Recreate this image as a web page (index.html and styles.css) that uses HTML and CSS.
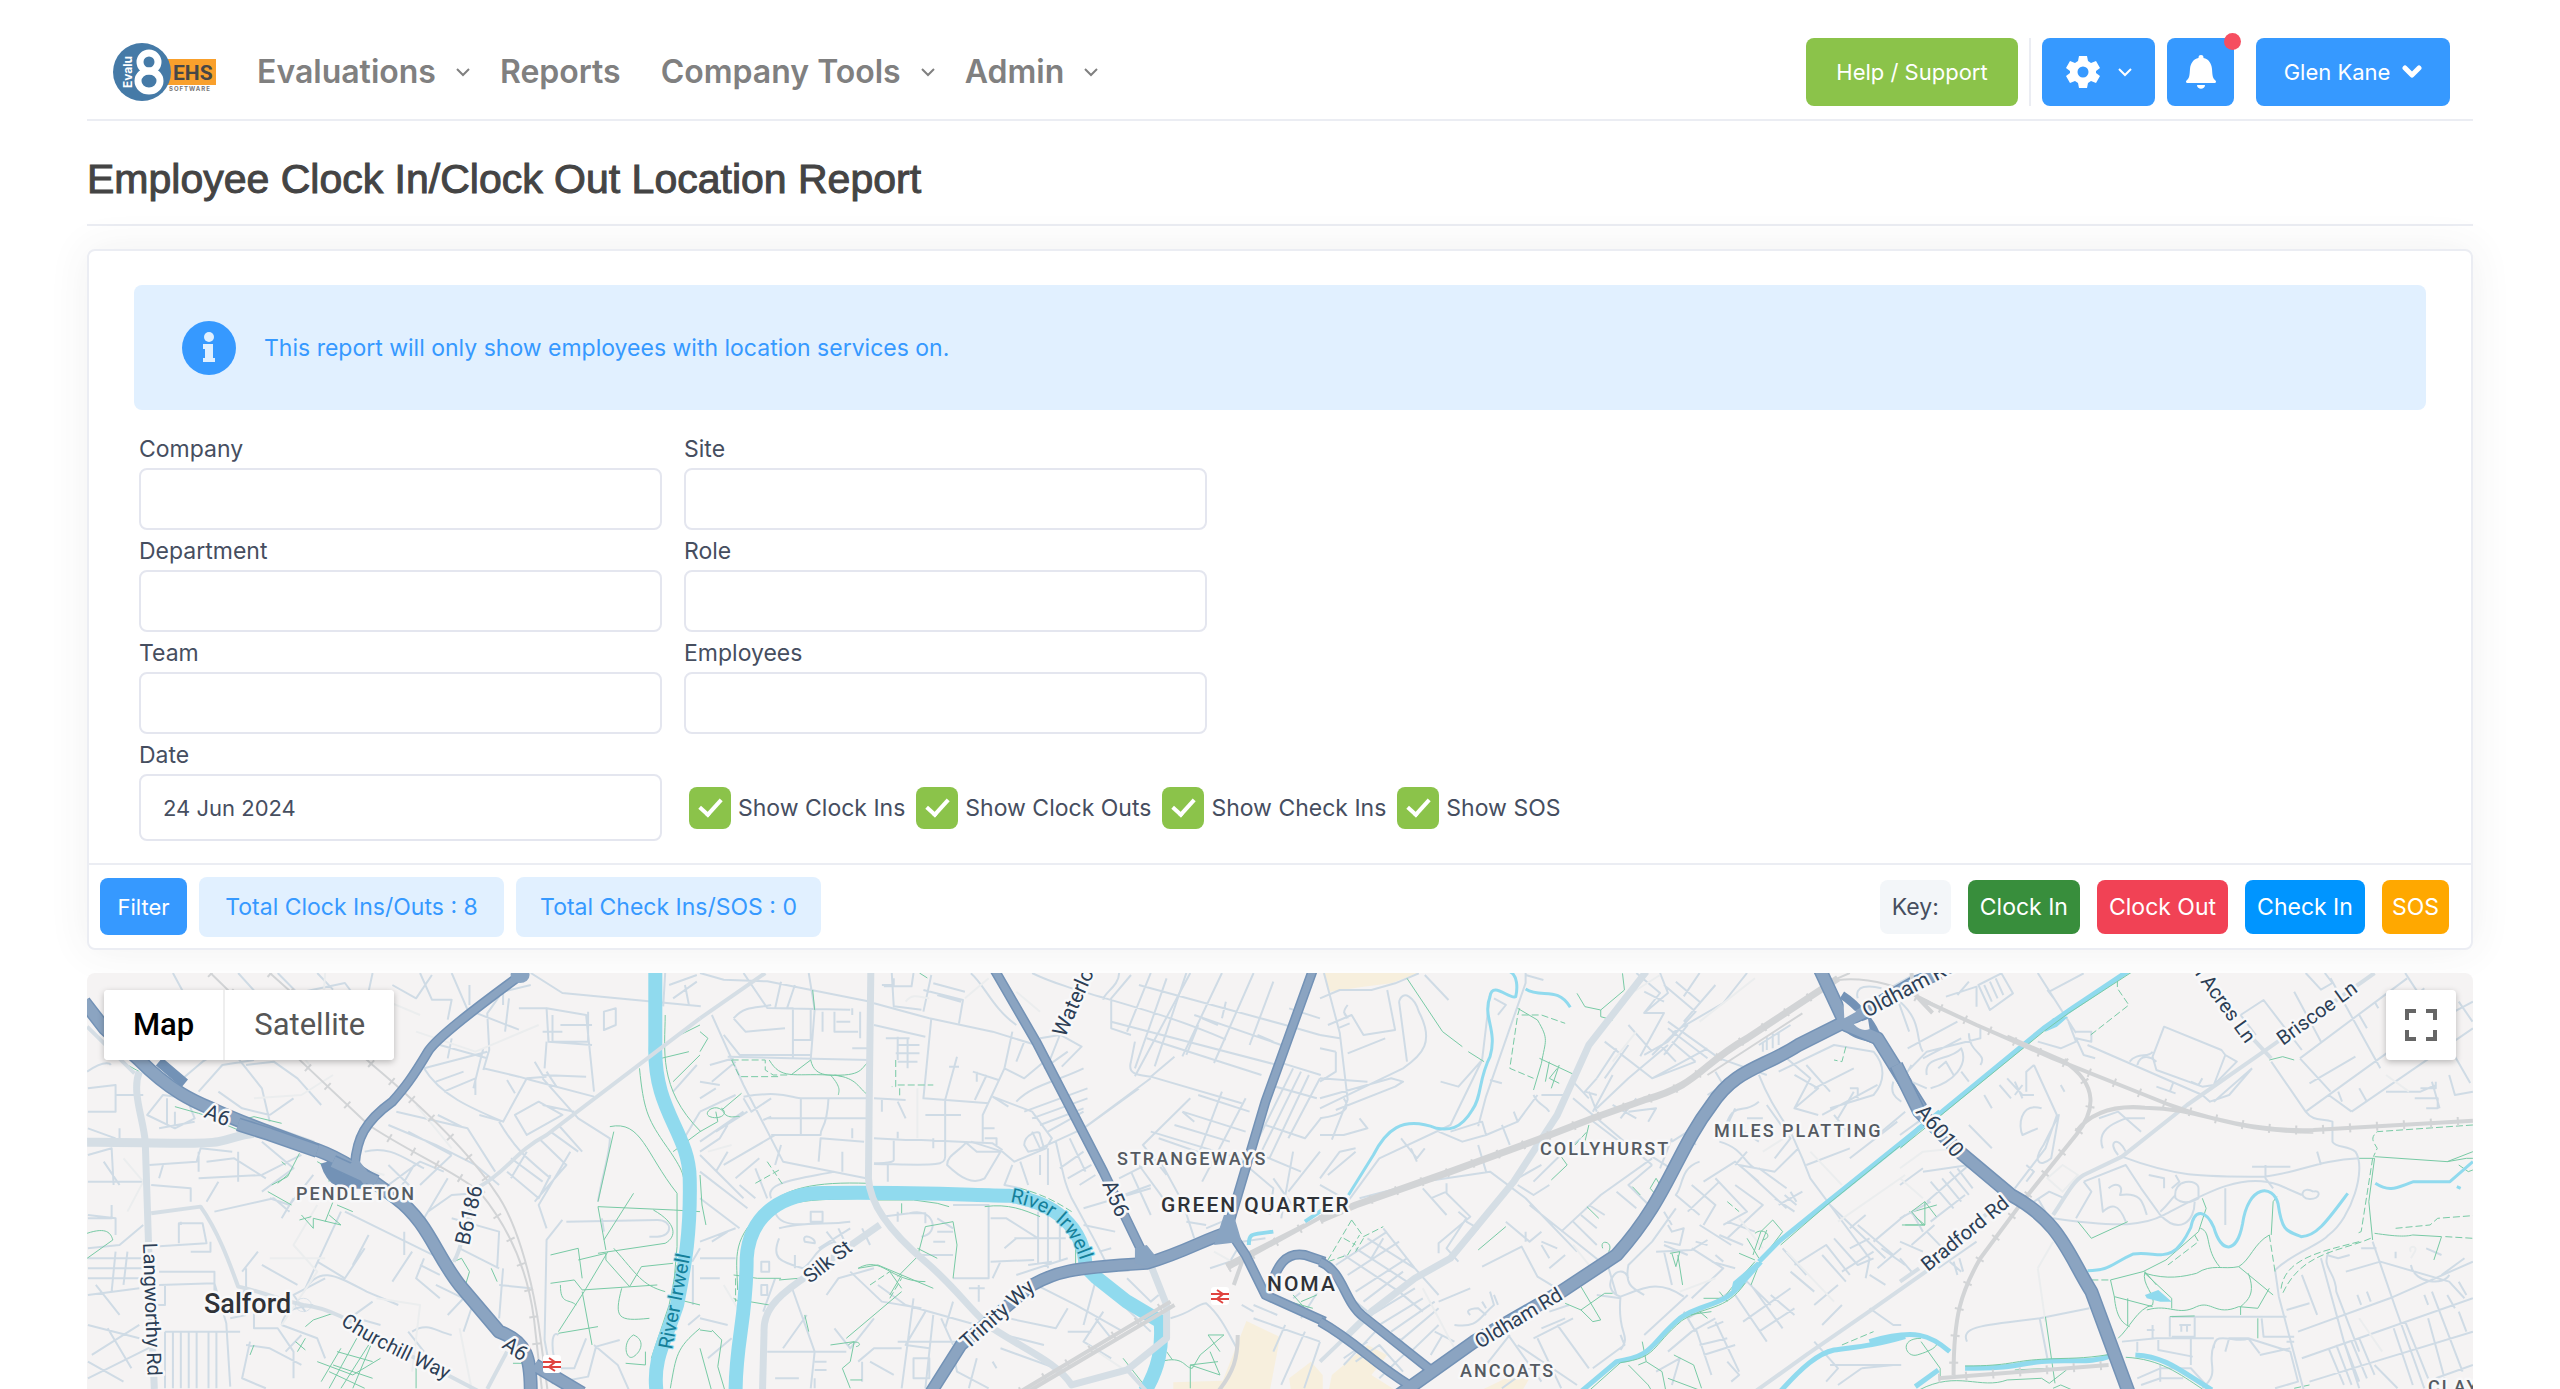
FILE: index.html
```html
<!DOCTYPE html>
<html lang="en">
<head>
<meta charset="utf-8">
<meta name="viewport" content="width=device-width, initial-scale=1">
<title>Employee Clock In/Clock Out Location Report</title>
<link rel="stylesheet" href="styles.css">
</head>
<body>
<div class="page">
  <header class="topbar">
    <a class="logo" href="#" aria-label="Evalu8 EHS Software">
      <svg width="104" height="60" viewBox="0 0 104 60">
        <rect x="54" y="17" width="49" height="26" fill="#f9a02c"/>
        <circle cx="29" cy="30" r="29" fill="#457aa7"/>
        <text class="logo-side" transform="translate(19 46) rotate(-90)">Evalu</text>
        <g fill="none" stroke="#fff" stroke-width="7"><ellipse cx="36" cy="20" rx="9" ry="9"/><ellipse cx="36" cy="39" rx="11" ry="10"/></g>
        <text class="logo-ehs" x="60" y="38">EHS</text>
        <text class="logo-soft" x="56" y="49">SOFTWARE</text>
      </svg>
    </a>
    <nav class="nav">
      <a class="nav-drop" href="#">Evaluations <svg class="chev" viewBox="0 0 14 10"><path d="M1 2l6 6 6-6"/></svg></a>
      <a class="nav-plain" href="#">Reports</a>
      <a class="nav-drop" href="#">Company Tools <svg class="chev" viewBox="0 0 14 10"><path d="M1 2l6 6 6-6"/></svg></a>
      <a class="nav-drop" href="#">Admin <svg class="chev" viewBox="0 0 14 10"><path d="M1 2l6 6 6-6"/></svg></a>
    </nav>
    <div class="tools">
      <button class="btn btn-green" type="button">Help / Support</button>
      <span class="sep"></span>
      <button class="btn btn-gear" type="button" aria-label="Settings">
        <svg width="34" height="34" viewBox="0 0 34 34"><path fill="#fff" fill-rule="evenodd" d="M13 1h8l1 5 3 2 5-2 4 7-4 3v2l4 3-4 7-5-2-3 2-1 5h-8l-1-5-3-2-5 2-4-7 4-3v-2l-4-3 4-7 5 2 3-2zM17 11.500a5.500 5.500 0 1 0 0 11a5.500 5.500 0 1 0 0-11z"/></svg>
        <svg class="chev chev-white" viewBox="0 0 14 10"><path d="M1 2l6 6 6-6"/></svg>
      </button>
      <button class="btn btn-bell" type="button" aria-label="Notifications">
        <svg width="30" height="34" viewBox="0 0 30 34"><path fill="#fff" d="M15 0c2 0 2.500 1 2.500 3 5 1 8 5 8.500 11 .4 6 .5 9 3 11 2 2 1 3-1 3H2c-2 0-3-1-1-3 2.500-2 2.600-5 3-11 .5-6 3.500-10 8.500-11 0-2 .5-3 2.500-3zM11 30h8c0 5-8 5-8 0z"/></svg>
        <span class="dot"></span>
      </button>
      <button class="btn btn-user" type="button">Glen Kane <svg width="20" height="14" viewBox="0 0 20 14"><path d="M3 3l7 7 7-7" fill="none" stroke="#fff" stroke-width="5" stroke-linecap="round" stroke-linejoin="round"/></svg></button>
    </div>
  </header>

  <h1 class="title">Employee Clock In/Clock Out Location Report</h1>

  <main class="content">
    <form class="card">
      <div class="card-body">
        <div class="alert">
          <svg width="54" height="54" viewBox="0 0 54 54"><circle cx="27" cy="27" r="27" fill="#3699ff"/><g fill="#e1f0ff"><circle cx="27" cy="16" r="5"/><path d="M21 23h10v14h2v4H21v-4h2v-9h-2z"/></g></svg>
          <span>This report will only show employees with location services on.</span>
        </div>
        <div class="fields">
          <div class="field"><label for="company">Company</label><input id="company" type="text"></div>
          <div class="field"><label for="site">Site</label><input id="site" type="text"></div>
          <div class="field"><label for="department">Department</label><input id="department" type="text"></div>
          <div class="field"><label for="role">Role</label><input id="role" type="text"></div>
          <div class="field"><label for="team">Team</label><input id="team" type="text"></div>
          <div class="field"><label for="employees">Employees</label><input id="employees" type="text"></div>
          <div class="field field-date"><label for="date">Date</label><input id="date" type="text" value="24 Jun 2024"></div>
          <div class="checks">
            <label class="check"><input type="checkbox" checked><span>Show Clock Ins</span></label>
            <label class="check"><input type="checkbox" checked><span>Show Clock Outs</span></label>
            <label class="check"><input type="checkbox" checked><span>Show Check Ins</span></label>
            <label class="check"><input type="checkbox" checked><span>Show SOS</span></label>
          </div>
        </div>
      </div>
      <div class="card-foot">
        <button class="filter" type="button">Filter</button>
        <span class="total">Total Clock Ins/Outs : 8</span>
        <span class="total">Total Check Ins/SOS : 0</span>
        <div class="keys">
          <span class="key key-label">Key:</span>
          <span class="key key-in">Clock In</span>
          <span class="key key-out">Clock Out</span>
          <span class="key key-check">Check In</span>
          <span class="key key-sos">SOS</span>
        </div>
      </div>
    </form>

    <section class="map" aria-label="Map">
      <svg class="map-art" viewBox="87 973 2386 416" preserveAspectRatio="xMinYMin slice">
        <!-- Salford and Pendleton -->
        <g transform="translate(80 965) scale(.3954 .3333)">
          <path class="st" d="M235 24L265 90M400 24L450 90 560 80 640 180 700 260M500 24l50 60 120-30 50 80 50-10M600 24l40 50M740 24l-20 110M860 24l30 80 50 0-10 60M790 60l60 40 40-70M940 24l40 110 130 60M985 60v60M1140 24l80 60 350 40M1140 60l-70 20v40M1060 95l-30 50 5 110-15 60M1085 100l-10 100M1110 130h70l5 100 110 10M1180 130l100 20 20 230M1195 150v80h90v-90M1215 180h80M1170 200h50M1180 230l-5 80M1325 140l30-10v50l-30 15zM870 310l160-50M910 240l120 40M940 220l-10 60M1020 310l90 25 30 10 160 50M1020 250l-25 120M1150 290l20 40 110 5M870 310c40 80 120 120 200 160l60-130 50-5M900 350l70-30M920 380l80-40v50M1080 345l20 40M1180 320l25 45M1060 470c40 80 60 100 130 170M1010 450l60 20M780 480l120 60 100 60 60 60M800 440l180 50 70 130M905 450l60 35M830 500l110 70M720 560c60-20 100 20 150 50M780 660l80-70 60 30M780 600l60 70M845 600l-40 80M880 740l60-50 60-5M930 640l-60 120M940 570l-80 90M1080 620l80 80 30-70M1090 580l80 70M1130 560l-40 80M1160 520l70 80-80 110M1100 450l60-40 60 40-90 60zM1250 440l-80-20M1190 500l70 60M1210 480l60 80M1240 560l-80 160 20 70M1310 710c10-80 30-140 30-190l-80-60-90-120"/>
          <path class="st" d="M20 370l70-10v80H20M90 390h70M170 450l40-60 60 10 20 60-50 30zM220 400v80M200 490l90-20M18 320c50-40 60-20 60-20M250 350l60-60 80-60M300 380l60-80 80-15M400 280l60 90 20 100M420 300l70-10 60 50 60 80M350 380l60 50 70 20M480 450l60-50M100 490v50M240 440v50M20 490l70 30M20 570l60-20 5 110M60 590l40 70M20 650h150M175 600l120-10 10-40 80 10M300 560v60M320 590l70-10 80 60M180 660l100 10 0 40M200 640l10-40M300 640l160-10 100-60M400 560v90M460 530l80 80-80 70M350 650l-30 60M340 740l150-40 40 40M480 700l50 20 60-90M510 760l30-60M20 750l70 10v50M80 720v40h-60M180 845l140-10-10-60h-60v60M255 780v-10M160 780l-60 60-80 10M330 830v30l-50 0M20 880l150 0M20 910h150M20 940h150M90 860l-10 120M120 860l-10 100M20 990l130-20M40 960l60 90M200 960l140-5 30 120 10 190M200 920h140v60M215 960v60H190M215 1100h190M215 1100v170M235 1100v170M255 1100v170M275 1100v170M295 1100v170M325 1100v170M345 1100v170M20 1080l130 40M30 1170l120-90M70 1090l60 120M20 1190l90 60M20 1240l170-100"/>
          <path class="st" d="M670 740l240 140M570 970l90-230M565 980c40-80 80-50 160 0l80 40M600 890l70 50 50-90M790 950l50-90M730 810l-40 90M820 800v70M860 900l50 30M870 880l-20 60 60 60M940 760l120 40-5 110M990 760l-30 90 100 60M1060 960l80 10M1070 910l-10 150M900 960l70 40-40 50M990 1030l-20 70M840 1100c40-30 60 0 100 10M830 1100l40 60M740 1010l-70 60M620 940l-80 50 30 50M700 1060l60 20M460 900l90 60M420 910v60c-20 30-10 50 20 60v60l60 0 40 70v80M510 1080l90 40 20 60M510 1080c10-60 50-50 80-60M430 1130l-20 110 60 30M380 1060l40-10M560 1200l-80-50-60-10M450 860l-40 60M520 1160l40-50M1230 770l230-5c40 0 40 50 0 50h-20M1220 765l-40 60-5 300 20 130 90-20 20-90 60-20M1210 1110c-20-20-20 60 0 100l40 0 30-90M1300 1140l60 60 30 80M1320 760l5 40M1480 24l-5 100M1500 100l60-50M1490 60l70-30M1530 60l10 60M1560 300l-60 80M1568 440l-40 80M1550 900v120M1568 850l-20 40M1568 1050l-30 30"/>
          <path class="st pale" d="M620 24l-10 180M850 200l150 60 160-80M700 160l60-60 100 50M520 200l60 100M440 400l120-10 80-60M110 580l50 70-40 90M600 720l-60 120 60 80-90 160M850 420l90 130M480 880l140 0M960 1090l30 180M750 1000l110 20-20 200M680 600l90 30"/>
          <path class="gr" d="M105 290l45 30M240 425l60 20 80 30 60-20 70 20M350 470l60 30 40 5M510 590l10 10M555 565l-30 70-40 25M475 680l60 40M640 710l-20 60M500 655l30-30M560 750l30 40 0-30 70 20-30-30M555 765l30-10M600 590l30 20 0 40M670 640l20-50M590 540l90 40M650 720l40 20M1340 485c80-20 90 80 170 200v160l-10 135M1310 725l190 10 68 5M1350 500l-40 210M1310 725l20 130M1400 685l-75 140M1450 735c60 40 60 80 30 100l-170 30M1190 870l70-20 10 90M1260 885l70-20 0 20 60 80 30-60 80-10M1335 860l-60 120-65 120M1190 955l60-10 20 30 190-15M1350 850c60 80 70 110 130 130M1215 960c0 60 20 40 40 60M1270 980l25 160M1210 1105l100-20M1370 970c-20 90-10 100 70 90M1400 1110c-30 20-20 80 0 65s30-50 0-65zM1380 1195l50 5 0-40M1415 310c10 120 20 150 60 220 60 100 50 100 55 150M1480 150c0 100-20 220 90 350M1500 560l68-60M1500 350l68-80M1470 280l70-20M1500 220l68-40"/>
          <path class="gr" d="M18 805c50-20 60 0 65 20l-65 55M945 890l20-10 20 40-10 40M1040 910l15 40M430 1170l10-30M570 1085l20-20 50-20M545 1130l25 25M570 1120l-20 40M600 1190l90 40 70-50M650 1160l90 30M660 1150l-50 100M700 1120l-70 150M730 1140l-70 130M640 1200l100 40M750 1100l-60 170M630 1220l90 50M850 1180v90M1095 1195l50 0M1500 1000l68 20M1568 1090c-60 60-60 80-75 180M1510 900l-20 120-45 160"/>
          <path class="rail" d="M330 24L560 290 730 480C830 560 950 620 1010 680 1080 780 1130 900 1148 1060L1168 1272M480 24L740 300C900 460 1000 590 1050 680 1100 760 1140 920 1160 1080L1182 1272"/>
          <path class="tie" d="M330 24L560 290 730 480C830 560 950 620 1010 680 1080 780 1130 900 1148 1060L1168 1272M480 24L740 300C900 460 1000 590 1050 680"/>
          <path class="riv" d="M1455 20V240C1450 440 1540 500 1542 640 1545 800 1530 900 1510 1020 1480 1130 1448 1180 1458 1280"/>
          <path class="art w4" d="M180 745L305 725C350 800 380 900 400 965 460 980 520 1010 565 1020 640 1030 700 1080 800 1150L1010 1280M945 890C970 850 985 700 1010 665 1080 620 1100 560 1180 510L1568 160M1080 1160L1030 1272M18 185l120 140"/>
          <path class="art w7" d="M150 320C130 380 160 460 165 530L175 900 188 1272"/>
          <path class="art w9" d="M18 532C130 530 300 542 350 530 390 520 400 510 440 505M470 490l120 50"/>
          <circle class="st" cx="565" cy="1020" r="20"/>
          <path class="hc w10" d="M1115 30C1000 130 900 220 880 260 840 340 820 370 790 410 720 470 700 520 695 600M200 290L265 355"/>
          <path class="hc w13" d="M10 110L62 190 150 285C230 380 290 410 330 430 420 480 520 520 600 555 680 590 740 650 800 700 880 770 900 870 960 960L1060 1100C1130 1130 1140 1180 1140 1280M1150 1200L1270 1285M625 590C640 650 660 652 720 650"/>
          <path class="hw w10" d="M1115 30C1000 130 900 220 880 260 840 340 820 370 790 410 720 470 700 520 695 600"/>
          <path class="hw w13" d="M10 110L62 190 150 285C230 380 290 410 330 430 420 480 520 520 600 555 680 590 740 650 800 700 880 770 900 870 960 960L1060 1100C1130 1130 1140 1180 1140 1280M1150 1200L1270 1285"/>
          <circle cx="1113" cy="30" r="24" fill="#89a4c2"/>
          <path class="hc w13" d="M400 478l80 30 120 50M640 590l110 60"/>
          <path class="hw w13" d="M400 478l80 30 120 50M640 590l110 60M690 590l40 60"/>
        </g>
        <!-- Strangeways and Green Quarter -->
        <g transform="translate(700 965) scale(.3954 .3333)">
          <path class="sand" d="M1382 1068l85 48-25 156h-245v-20l125-5zM1490 1240l55-50 30 40v50h-80z"/>
          <path class="st" d="M0 24l60 20 110 5 255 60M205 50l-15 80M240 60l-20 70M110 24l60 105 210 5M170 130h65v150M85 160c30-40 60-30 95-40M85 160l30 40 100-10M235 225h45v-90M275 24l15 110-10 150M310 140v60M340 140v60h60M405 140v80M385 150v-20M345 170h35M385 250h40M485 24l5 100 70 10M460 60h30v-20M540 24l-5 40h-70M585 30l-20 110M565 75l100 30-10 70M590 55l80 25M600 90l60 20M440 115l140 45 160 40 110 40M440 180l130 35M585 160l-20 240 165 15M470 220h60M500 240h55M495 265h60M500 290h50M525 220v90M500 215v70M650 275l-30 130v170c0 30-30 25-180 22M630 305l25 0M690 320l65 25M700 320v30M725 330l-30 75M800 180c-60-50-80-120-115-155M790 200l-20 110 50 30 50-50M770 310l-55 140 0 80M740 395l100 45 50 80-15 30-80 40-30-30-80-30M800 290l20-60M860 220l50-10-30 90M905 205l60 40-50 60M930 260l-60 50M800 410c40-50 100-60 170-100M820 440l160-70M840 460l140-60M860 480l110-50M880 500l90-60M740 395l40 30M900 530c20 100 20 120 40 170l60 130 30 70M935 520l40 100M910 610l60-50M930 640l60-40M960 660l40-30M860 550l110-60 170-150M970 490l140-120M1140 335l60-60M1240 24l-140 310"/>
          <path class="st" d="M840 24c100 60 300 100 490 200M1060 24c0 40-40 60-40 80M1090 30l-50 70v90l50 20M1140 24L1080 200M1180 40l-80 270M1230 24l-80 280M1320 24l-100 250M1400 24l-100 270M1450 50l-60 190M1110 60l370 120M1040 170l420 130M1090 290c-10 40 20 40 50 45l230 80M1100 230l-10 60M1130 220l290 110M1250 150l220 90M1270 160l40 20M1260 180l-30 90M1330 110l-10 50M1410 210l40 20M1480 180l88 30M1490 130l78 30M1460 290l110 40M1140 500l250 90M1240 400l-120 140 60 90M1220 440l160 60M1260 390l130 50M1200 480l140 50M1160 520l170 70M1220 440l30 30M1320 380l-60 190M1380 400l-110 250M1500 310l-100 240M1520 320l-100 240M1540 330l-100 250M1568 340l-80 180M1440 360l120 40M1430 480l100 40 40-60M1400 560l120 60M1390 610l60 60-10 80M1060 640l100-60 60 130 30 110M1090 620l50 130M1050 700l90-40M970 730l170-60M1110 600l80 130M1450 640l60 100M1500 560l-30 200M1568 560l-80 120"/>
          <path class="st" d="M30 150l80 210 100 230 210 50M60 210l40 60h180M70 275l160 5 200 5M85 280l-60 20M110 395c100-20 120 5 150 5h160M110 400l20 40 50-40M170 460h250M160 465l20-10M250 510h55c0-30 15 -10 20-110M255 400v110M300 590l5-70 110 10M180 510l70 0M205 540l-15 60M360 560v60M385 490v30M440 520l80 5h40l180 10 25 20M440 400l80 5M500 410l20 50M460 400v40M500 500v20M570 450h90M590 520v30M490 525v60c0 10-50 10-50 10M475 600v50M670 530l30 30h60l-40 80c-30 20-60 0-95-40 0-30 30-40 50-70M715 490h30M720 520h30v20M820 540c0-30 40-50 40-30l10 40-40 10zM790 600l-20 60 40 10M810 590l20 70M840 500l20 50M880 550v110M860 570v60M0 400l40-30M0 440l90-50M40 500l80-60M0 530l110-90M60 600l130-90M0 560l50-40 20-40M30 350l60-60M0 350l50 10M0 570l110 130M0 620l120 110M0 700l100 90M40 620l30-60M90 640l60-60M100 660l40 40M180 700c-20-50 80-60 160-80M170 700l-30-90M0 880h90M30 830l40-30M0 940h50M0 830l90-40M280 740h30v30h-30zM190 740c10 50 80 40 120 30M200 790c60-20 120-10 180-20M200 820c-20 60 0 70 60 90 30-20 20-50 80-80M265 830c-10-30 30-10 25 5zM240 870v40M300 850l80-60M320 800l40 60M350 790l20 50M410 790l20 50M155 890h20v30h-20zM155 960h15v30h-15z"/>
          <path class="st" d="M460 755l70-10h40v30M500 740v30M530 745c60-20 80 60 30 70M600 760l40 30M600 800l40 0M590 830h30M560 870l80 0M640 720h90v220h-90M735 760l40 0 80 60M735 890l110-5M795 820h130M855 740v160M880 750v160M910 780v110M800 820l-30 30M800 930l130-50M830 900l60-10M740 940l20-50M705 960v50M680 970h40M170 1160h200M190 940l-30 100M230 960l60 200-10 110M270 1050l-60 100M320 990l30-50 90-30M340 1090l40 60 60-90M380 920l80 90 100 20M450 960l70 60 180 60M540 1000l-30 270M570 1040l-50 100 60 10M590 1050l-20 220M610 1060l30 80M640 1010l-20 80M500 1130h160M540 1180l40 0v60l-40 0zM400 1190l40-40h70M410 1190v60M430 1190l60 40M290 1190h30M290 1215h30M290 1240v30M190 1240h60M640 1160l10 60 80 50M700 1180l-20 90M740 1190l10 20M760 1150l140 60M770 1110l100 30M780 1060l120 30 30-60M850 960l100 60 120 80M1000 950l-30 130M930 1100h60M1080 940l60 70 20-20M1060 1010l80 90M1020 1040l-50 90 70 50M1000 1060l40 60M1190 1060c60-20 60-40 90-45 40 40 60 100 80 140M1290 910l50-20M1340 890l30-60 60-10M1370 1020l30 20M1400 1020l60 30M1480 1080l-30 80M1530 1100l-60 160M1568 1130l-40 140M1400 1060l168 70M1500 1000l68-60M1520 1060l48-90M1280 790l60-30M1230 770l50 10M970 780l80 20M1010 860l30-10M0 1060l70 20M20 1180l60-60"/>
          <path class="st pale" d="M520 110c20-30 40-10 60-10M550 370v150M670 100l60-60M1300 860l60 40M800 80l60 60M20 560l60-20M980 1140l100 80M60 960l50 100"/>
          <path class="gr" d="M285 75l5 60M175 285c30 60 60 40 150 45s80-20 105-45M280 285c10 60 60 40 80 50M280 285l-50 45M330 330c30 40 20 50 20 60M340 330c60 10 60 40 85 60M105 385l-50 50c-20-20-50 10-30 20s50-5 30-25c10 40 40 20 45 25M0 500l45-30-5-30M0 200l20 20-20 40M555 24l20 15M0 630l5 90 10 60M425 655c-130-5-220 10-270 90-80 80-60 150-60 230M425 700c-160 5-220 0-270 80-50 100-30 150-30 230l50 10M440 705h100l60 10 30 10M510 715v30M640 770l-70 15-20 90-50 60M640 770l10 70-10 100M550 850l50 30M400 910c60-40 80 40 170 40M480 920l30 50M510 930l-30 60M400 910l50-10 60 30 80 40M200 945l50-5M85 930l60 10h60M85 1000l40 30M30 1095l25 30-10 80 20 80M0 1095l30 5M0 1150l30 130M265 1050l10 50M330 1140l60-10-10 60-20 20 20 60M370 1120l80-80 60-60M375 1140c20-20 40 0 20 5M380 1245h30M950 900v-60c-10-50-60-100-120-120M720 725c60-10 100 10 140 30M985 935l50 45M1180 1130l-15 60c60-20 60 20 80 20l20-40 60-60h-40l30 50M1180 1160l15 25M1240 1270v-70l70-10M1240 1200l75 30-25-70M1490 1010l60 20M1500 990l30 40M1520 1010l40-20M600 1230l50-90M1070 1180l60 90"/>
          <path class="gr dash" d="M80 285h85v30l20 15h40M80 285l20 50h100M495 285v80h-10M500 360h90M505 370v30M170 590l40 70M140 655l60-40M90 940v70M810 670c60 20 90 40 130 70M430 960l50-40M480 1000l30-60"/>
          <path class="riv" d="M90 1280C90 1130 118 1060 118 880 125 740 220 684 310 684 520 680 680 690 780 692 900 710 972 790 975 905L1000 935 1080 1010 1165 1070C1170 1150 1160 1210 1125 1280"/>
          <path class="riv w4" d="M1388 840c0-40 10-30 62-40M1530 770l50-40"/>
          <path class="art w7" d="M432 20L428 400 426 640C430 740 520 840 570 890 650 970 700 1060 740 1090 830 1160 900 1190 940 1260L1080 1215 1180 1120V1020L1140 900M455 780L250 950C190 1000 160 1040 162 1100L158 1280"/>
          <path class="art w4" d="M0 160L165 24M1080 1215L1130 1280"/>
          <path class="rail w4" d="M1335 910L1580 750M1330 900l200-120M1350 960l30-100M810 1280L1190 1010M830 1280L1200 1020M1310 1280c40-60 50-100 50-170"/>
          <path class="tie" d="M1335 910L1580 750M810 1280L1190 1010"/>
          <path class="hc w10" d="M745 15L850 230 1020 620 1130 890M1550 15L1430 410 1335 790 1380 870 1430 990 1580 1070M1440 975C1460 900 1480 860 1530 870L1580 890"/>
          <path class="hc w12" d="M580 1290L660 1140 840 960C900 920 930 910 1130 895 1230 860 1280 820 1340 800"/>
          <path class="hw w10" d="M745 15L850 230 1020 620 1130 890M1550 15L1430 410 1335 790 1380 870 1430 990 1580 1070M1440 975C1460 900 1480 860 1530 870L1580 890"/>
          <path class="hw w12" d="M580 1290L660 1140 840 960C900 920 930 910 1130 895 1230 860 1280 820 1340 800"/>
          <path fill="#89a4c2" d="M1325 750h25l20 80-70 10zM1100 850l30-10 30 45-30 20-30-10z"/>
        </g>
        <!-- Collyhurst, Miles Platting and Ancoats -->
        <g transform="translate(1320 965) scale(.3954 .3333)">
          <path class="sand" d="M5 20h255l-80 35-70 10-85 15zM30 1230l90-90 50 30-40 60 80 60H20zM400 1280l70-40 60 0-20 40z"/>
          <path class="st" d="M0 100l50-25 80 0 60-20 60-30M10 24l40 180 20 200-40 120M20 180l60-30 30 60 80-15-20-120M70 160l-10-20M45 190l30-15M70 265l95-45M0 340l120 10M70 120c-20 30 0 30 0 40M200 110c10-40 40-10 50 30 40 90 10 130-40 170L0 430M200 110l20 180M265 30l60 75M0 460c60-10 80-30 60-60M40 435l150-70 20-15-30-10-180 60M40 260v60L0 350M100 460l20 30-60 20H0M0 210l50 10M0 250l40 10M430 85l-20 200-60 80-45-15M430 345l30 10M410 285L330 480l-180 100-80 130M520 24v30l-100 340-20 90M520 30l45 15M440 100l30 20-20 30M330 500l80-30 10 40-60 20M300 500l60 30 60-20 80-40 50-80M490 440l10 30M460 480l20 60M400 540l20 80M205 520l40 60 20-30M230 550l15 40M0 640l50-80 40-10M20 630l40-40 30-30M0 660l60 40M100 700l160-50 170-30 90 80 130 160M260 670l60 80M320 655v30l60 70-80 80 0 30M320 680l-40 20M350 740l20 20-50 90 30 40M370 770l30 20-50 70M470 770l60 60 30-30M520 830v-30M560 840l20 40M500 660l40 30 40-30M500 640l60-40M530 720l200 190 20 80M540 650l60-70 60-60M410 905l100-60 40 90 70 50M580 910l40-40M600 850l-40-20M610 800l100-110 130-110M640 770l60 70M660 750l40 40M680 720l40 30M750 680l50 50M840 600l-60 60 60 70M780 800l60-60M820 560l80 60M640 400l60 60 140 140M680 460l100 90M700 430l80-90 100-100M680 380l20 60M700 340l-30 40 30 10M740 330l-50 110M740 420l60 40M760 460l40-60M780 440l70-10-20 40M640 350l40 50M560 390l70 0M540 390c10 30 30 30 40 50"/>
          <path class="st" d="M720 230l120 110 110-50M800 24l60 60-40 60 50 0-60 130M860 24l20 60-60 60M870 60l80 80-70 90-60 40M900 50l60 60M960 24l-40 70M1000 60l-80 110M1080 24l-60 90-130 90M880 190l100 90M900 200l-60 70M860 240l40 50M890 230l60 60M930 180l-60 90M980 250l-140 90M880 170l130 110 120 50M1000 320l20 40-40 30M820 80l50 30M780 180l60 80M750 250l-50 90M780 240l-60 100M1110 240l80-60M1120 230v30M1130 215v40M1145 205v45M1160 200v40M1180 280l60 60-40 90 60 20M1110 330c20 60 40 100 80 170l30 80 20 60 50 80 140 160M1110 410c-40 40-60 0-80 60l80 60M1130 420l60 100-40 60M1050 430l-20 50M1080 460l40 0M1160 320l140-80 100 20c30 40 30 90 0 130l-110 40M1200 330l60 40-60 60M1250 370l100-60M1230 300l60 80M1340 370l20 0 0 30M1270 450l140-90M1250 490l60-20 50 20M1300 450l40 60M1350 380l-40 80M1340 580l120-110M1230 600l110-50M1060 600l90 20 60-70M1080 560l-30 40M970 650l80-60 60 60M960 590c-50 20-40 70-60 100l60 60M890 530l40-30 20 40M890 520l-30 90M1010 530c60 20 60 60 90 80M940 660l60 60-30 60M930 740l80-90M1000 640l80 100-60 40M1050 660l70 60-90 100M960 780l80 60M1080 620l100 110M1110 610l70 60M1150 700l50 40M1160 720l60-40M1175 690l30 30M1190 680l15 30M1100 800l-70-30M1010 810l60 30M900 730l-60 100-60 70c-10 60 10 70 40 90M870 740l20 40M880 780l10 20 30-10-10 50-40-10M850 860l90-5 40-30M930 870l-60-30M980 840l-30-10M1000 870l20 20M870 860l20 100M940 850l80 60-80 90M990 890l60 20M780 940c-20-60-80 30-20 55 60-30 100-50 160 0M760 995c-10 120 30 110 0 160M700 990l60 10M820 1110l110-120M760 1110l10 30-80 70M640 1060l-100 60M600 1080l80 130M550 1120l60 150M500 1140l150 120M470 1100l90 150M580 1040l50-20M560 1090l60-30M420 1200l60-90M460 1270l70-60"/>
          <path class="st" d="M60 870l140 110 60 60M90 850l130 100M120 820l120 90M160 790l80 120 60 80M40 900l130-100M70 930l130-100M90 980l130-100M110 1010l100-90M130 1050l110-80M150 1080l110-80M180 1100l110-90M120 1040l-30-30M200 1130l100-100M230 1160l70-80M340 1080c60 10 60-20 100-60l-10-40M380 1050c-20-20 20-20 20-20l20 20M410 1010l10 20M440 990l10 30M300 1010l80-40M130 880l30-60M60 1180l60-50M90 1190l60-50 60 80M60 1200l80-100M150 1240l70-80M200 1120l30 40M290 1100l50 30M280 1170l30-60M850 1220l60-40-20 80M880 1160l60-60 60-40M950 1090l40 140M1000 1070l60 150M980 1090l40-20M960 1140l70-20M970 1170l80-30M1030 1190l30 40-20 20M920 1040l30 60M930 1060l150-110 60 70M1050 990l80 140M1090 960l80 130M1070 1070l120-100M1110 1100l90-70M1140 990l60 60M1170 850l60 80M1200 900l80-60 60 90M1190 920l60 60M1270 870l60 80M1290 720l100 160-10 60M1320 920l80-60M1300 820l60 80 40-20M1340 850l50-30M1360 780l90 90M1400 830l80-80M1420 850l60 50M1340 790l40-40M1410 910l60-60M1390 930l40 30M1250 1020l60-60M1270 1080l50-60M1390 1030l60 50 20 0M1250 1130l60 80-30 40M1290 1200h180M1370 1210l80-10M1310 1260l60-50M1420 500l60-60M1450 350c-10 40 10 50 20 60M1460 100l30 100M1360 100c-10-40 30-40 60-30M1440 70l60-40"/>
          <path class="st pale" d="M860 30l-80 60M1100 40l-140 130M800 200l-60 90M1060 760l60 90M1240 560l80 100M1310 770l170-140M640 840l60 90M1200 500l-80 60M1180 860l120 150M1000 940l-90 40M260 970l80 180"/>
          <path class="gr" d="M220 40l90 160 50 45M375 260l40 30M500 130l50 35c30 60 20 60 10 130l-20 80M555 280l90 50M580 290l-10 60M605 300l-20 70M580 340l25 15M600 310l-20 30M650 85l20 40 40 10 60-60-5-50M710 135v20l30 10M680 480l-10 50M610 575l15 25-40 45M675 725l30 35M790 665l20 25M850 640l-15 30 15 20 10-30zM715 850c-10-30 30-20 15 10M400 855l70-70M660 965l50 100-20 5-30-35M620 1015l40 20 60-50h20M885 865l25-5-10 45-10-40M905 870l12 90M1080 820l30 60M1115 800l30-35 25 35-70 110M1115 800l-20 70M1130 795l-20 60M1100 805c20-20 50 10 20 20M1060 865l40 20M1100 890l-60 80-20 30-50 0M1010 980l20 30M1110 900l-20 60M930 1050l60-10M960 1040l20 20M815 1130l10 60-20 10M825 1190l40 30 10 60M780 1200l50 60 10 20M895 1170l50 30 20 70M880 1240l90 40M1490 740l40 40-50 0M1500 740l60-20"/>
          <path class="gr dash" d="M505 130l-5 20-20 160 60 30M510 150h50l60 25M80 765l-60 120M80 765l30 50 50-30M110 820l-20 40M60 820l30 20M20 890l50-20 30-60M1030 710l30 30M1330 245l-10 45-20-5M1320 1140l80-40M645 540l30-40"/>
          <path class="riv w3" d="M480 20c20 10 20 50 15 75-15 10-60-50-65 0-20 60 20 100 0 180-30 70-20 120-45 160-30 60-60 60-90 55-90-40-130 10-160 80L72 690M520 72c40 30 80-10 113 55"/>
          <path class="riv w5" d="M1568 440L1280 715 1160 830 1110 890M1070 950c-50 80-100 60-160 110-80 80-60 110-160 130l-90 90M1160 1285c60-80 100-120 140-130 60-10 90-10 180-40"/>
          <path fill="#90daee" d="M1045 950l60-60 15 5-60 80-20 0z"/>
          <path class="gr" d="M1568 446L1280 722 1165 840M1075 955c-50 85-100 65-160 112-80 80-60 110-155 126l-85 90"/>
          <path class="art w7" d="M825 20L680 240 600 450 490 650 330 880 240 940 130 1040 70 1110"/>
          <path class="art w4" d="M70 1110L0 1190M1568 890L1400 1030 1230 1170 1100 1280"/>
          <path class="rail w7" d="M0 765L90 720 330 620 560 520 690 460 820 405C960 360 960 300 1080 220L1310 40"/>
          <path class="rail" d="M980 330L1220 145M1310 45C1380 35 1480 60 1568 130M1290 50L1340 24"/>
          <path class="tie" d="M0 765L90 720 330 620 560 520 690 460 820 405C960 360 960 300 1080 220L1310 40"/>
          <path class="hc w10" d="M0 890C60 920 60 1010 110 1055L280 1215M0 1070C90 1130 130 1190 225 1260"/>
          <path class="hc w13" d="M200 1290L390 1130 610 980 750 870C880 700 900 560 990 420 1050 310 1120 310 1210 240L1370 145 1500 55 1568 24M1265 15L1330 180 1410 220 1520 430"/>
          <path class="hc w8" d="M1320 90C1360 120 1400 180 1410 220M1370 145L1410 220M1330 180C1350 220 1390 210 1410 230"/>
          <path class="hw w10" d="M0 890C60 920 60 1010 110 1055L280 1215M0 1070C90 1130 130 1190 225 1260"/>
          <path class="hw w13" d="M200 1290L390 1130 610 980 750 870C880 700 900 560 990 420 1050 310 1120 310 1210 240L1370 145 1500 55 1568 24M1265 15L1330 180 1410 220 1520 430"/>
          <path fill="#f5f3f3" d="M1324 112l32 28-30 20zM1350 178l36-16 4 30q-20 10-40-14z"/>
        </g>
        <!-- Bradford and Clayton -->
        <g transform="translate(1900 965) scale(.3827 .3333)">
          <path class="st" d="M205 60l30 75 60-50-30-60zM220 60l20 50M235 50l20 50M250 40l20 50M360 24l100 180M390 80l90-55M385 75l20 30M120 95l80-30 0 60M150 90l30-40M0 110c60 60 40 120 60 150M20 250l130-80M60 280l100-60M10 330l60-70 140-40 0-30M180 205c0 60 50 60 30 95M70 330c-10-60 60-40 90-80 20 50-20 100-80 120M100 310l20-20 20 40M160 320l20 30M30 300l-20 40 60 30M220 390l20 40M260 360l30 40M300 350l20 50M280 340l40 50 30 0M300 390l20-30M440 170l20 60-40 20-60-20M350 300l-20 20 0 60M350 300l60 150-30 100-80 120M370 430c-60-20-60 60-50 80l40-20M420 360l10 20M375 540l40-90-20 130c-30 30-50 10-20-40zM330 600l20 20-20 30M460 200h40v30l-40-10 20 50 30 10M600 290c20-30 50-10 60-30M620 300c10-40 40-20 50-10M490 240l300 150 20 20 50-20 60-80M690 185l150 70 10 15-30 90-30 5-120-50-10-40zM850 270l30 20-60 70M670 365l50 20M715 350l-10 30M790 340l-10 20-20-10M920 310l-60 60-40 40M520 460l50-20 60 60M530 550c-20-60 40-80 60-90h50M570 570c-30-40 0-60 20-10M890 150l60-45 100 150M890 150l40 60M1060 24l40 50 30-20-20-30M1030 80l70 150M1125 40l130 270M1045 280l280-240M1070 355l120-80M1060 440l290-240 147-90M1320 24l40 70 130 260M1180 440l317-250M1120 390l60 50M1145 380l10 30M1200 370l20 40M1045 280l80 100M1200 150l20 40M1280 200l30 20M1240 110l10 20M1370 70l-20 20M1460 110l36 60M1435 330l15 60 47-10M1345 400h60v30h-30M1360 370h40v-20M1390 350l20 80M1270 380l90 0 40-20M970 290l90 150c20 30 40 20 70 30v60c10 20 40 10 60 30 30 50-10 200-70 250-20 30-90 50-140 105l10 80 60 260 40 160M580 575c140 60 200 60 370 60 90-10 140-50 250-55M920 605h100M955 600v40l20 30M1090 560l10 40M400 760c180 30 240 20 290-10 100-60 200-130 300-90l60 30M1080 680c-30-20-40 20-10 22s30-30 10-22M850 670v110M480 650l110-50 40 70 50 80M480 650l20 30-40 80M520 640l10 100c20-20 40-30 60 30M545 670c20-20 40-10 30 20 60-10 60 30 70 60M650 630l40 10v30M720 630l10 20-20 20M720 700c-10-60 60-60 60-30v30c-30 20-50 10-60 0zM770 710c0 60-40 100-90 40M680 740c20-20 30-40 40-50"/>
          <path class="st" d="M180 480l60 70M0 510l60-50M0 660l60-50M60 620l120-20-110 110M80 650l60 80M110 640l50 70M130 620l50 70M150 610l40 60M0 760l80-50M30 740l30 60M70 800l50 60M30 840l60-60M0 830l60 30M100 910l100-80M130 890l30 30M140 890l10 40M155 880l10 40M0 880l30 40M170 690l-90 80M350 710l40-30 40 20M360 700l20 40M175 1130c-20-50 60-50 190-70l130-30M365 1060l20 120M580 1130l90-10h150M620 1130v30M675 1125l0 30 90 20M760 1120v80M820 1150c0-60 60-10 90-30M820 1140c-20 60 20 80-30 130M850 1160l10-40h50l30 45M910 1120l110 40 20 90-60 20M940 1170l80-20M705 1055v60M770 1055v60h-60M710 1055h300M730 1080h30M735 1080v20M750 1080v20M945 1060l5 55h80M660 1080v40M645 1095h20M620 1240l60-30h80l40 50M630 1260l50-20h60M680 1200v50M1010 1130h20M1235 830l60 200 75 240M1010 1035l60-20M1050 930l40 120M1040 1100l240-100 217-110M1050 1180l447-180M1070 1250l170-60 257-90M1100 880l60 250 40 140M1120 860c-20 50 20 60 20 120l60 180M1165 920l90-30 180 60 40 50M1115 870l30 10 30-10M1205 850h40M1335 900c10 60 90 60 100 30M1375 850l40 20M1415 930l60-50M1295 860v20M1380 1060l50 210M1410 1040l60 180M1320 1070l60 170M1290 1090l50 170M1120 1150l40 110M1140 1140l40 120M1160 1130l40 120M1180 1130l40 110M1200 1120l40 110M1220 980l10 30M1195 990l10 30M1370 990l10 30M1390 980l20 60M1430 990l20 40M1460 950l20 40M1460 1040l20 60M1240 1200l60 70M1400 1240l97-40"/>
          <path class="st pale" d="M385 640l40-40 40 30-40 50zM0 610l60-50 90-10M360 910l20 160M360 910l40-80M1270 330l60 50M0 640l60 60M1335 860c-10-20 20-20 10 0l-10 20M1200 1060l60 100"/>
          <path class="gr" d="M30 740l35-30 30 45M65 710l0 70-60 0M30 740l30 40M965 285l35-10 30 10M465 770l35 50 95-50M790 700l10 30-20 70-85 85-60 35M785 790c30 10 10 60 50 115M635 920l-85 25 10 50c5 60 20 80 40 90M640 920c-10 40 30 70 20 100-40 10-60 70-90 100M640 925l70 75v30M640 925c60 20 100 10 135 0 40-30 70-10 110-20l90 85M560 995l100 30M595 1000v80M645 1035c60-20 80 20 130-10 40-20 50 30 110 0l50 5 30-60M910 925c20 60 0 80-20 100v25M885 905c30-20 40-70 80-95M985 695l-10 15-5 100M640 920l30 40M380 1055l25 200M935 1060v60M1200 580l40 0-15 130 10 115M1240 575l190 15 67-30M1430 590l50-10 17 0M1460 600l25 20 12-5M1240 805c60 10 80 10 100 5l75 5M1415 815l-20 70M705 1055l65-2M55 1120c-60 0-40 60-10 50s70-30 40-45M55 1130l50 80v30M50 1275c100-60 160 0 230-30l90-5M370 1240l20 15 45-40M400 1270l20-10 30 15M550 1150v30M300 1215l90-5"/>
          <path class="gr dash" d="M568 45v25l30 50-100 90M500 945h50M770 810l10 20-80 70M1497 480l-250 20c-20 20-10 30 0 50l-10 25M1235 580l-30 220-10 5M965 810l15 110M1230 820c-80 40-180 40-230 165M1200 830c-100 30-200 50-205 150M1295 790l90-10 20-20 92-8M1425 815l72 5M1030 1270l40-10"/>
          <path class="riv w5" d="M0 543L50 490 110 440 375 190 450 130 600 15M-80 1130C40 1090 80 1110 130 1160M170 1210c120 0 120-10 200-20s120 10 190-20M615 1170c80 5 120 50 200 105M40 1265L100 1215"/>
          <path class="riv w3" d="M490 917c60 0 60-20 120-50 70-10 100 40 150-80 10-60 40-50 60 0 20 80 60 80 75-10 15-120 80-120 93-60 10 80 20 80 60 98 40 0 70-50 122-130M1242 655c40 30 60 10 100-5h95l60-60M1455 665l10 5"/>
          <path fill="#90daee" d="M640 990l35-15 35 35-30 0-35-10zM375 190l25-30 40-5-30 30-30 15z"/>
          <path class="gr" d="M0 550L110 448 375 200 440 145 610 18M170 1203c120 0 120-15 200-20s100 0 180-15M590 1177c90 5 140 50 200 95"/>
          <path class="art w4" d="M0 950L50 910M400 750C430 700 450 650 480 630L580 575 750 420 950 260 1240 24M970 280L925 225M60 900L300 680"/>
          <path class="rail w4" d="M40 95L200 180 400 280 640 390C800 470 960 500 1080 495L1497 467M280 215L430 290C520 360 510 440 460 510L320 710 210 880C160 980 140 1050 140 1230M460 500C500 440 560 420 640 428 800 430 850 500 1080 500M100 1240L545 1200M30 24l5 60 50 60"/>
          <path class="tie" d="M40 95L200 180 400 280 640 390C800 470 960 500 1080 495L1497 467M430 290C520 360 510 440 460 510L320 710 210 880C160 980 140 1050 140 1230M100 1240L545 1200"/>
          <path class="hc w13" d="M-10 300L50 440 155 560 290 690C420 770 440 870 500 980L600 1290"/>
          <path class="hw w13" d="M-10 300L50 440 155 560 290 690C420 770 440 870 500 980L600 1290"/>
        </g>
        <!-- Street and river names -->
        <defs>
          <path id="irwell-n" d="M1010 1202C1045 1208 1086 1225 1087 1310"/>
          <path id="churchill" d="M340 1324C370 1345 400 1358 470 1391"/>
        </defs>
        <g class="road">
          <text transform="translate(203 1117) rotate(22)">A6</text>
          <text transform="translate(501 1347) rotate(36)">A6</text>
          <text transform="translate(469 1246) rotate(-77)">B6186</text>
          <text class="tight" transform="translate(143 1243) rotate(88)">Langworthy Rd</text>
          <text class="tight"><textPath href="#churchill">Churchill Way</textPath></text>
          <text transform="translate(1065 1038) rotate(-66)">Waterloo Rd</text>
          <text transform="translate(1102 1184) rotate(67)">A56</text>
          <text class="tight" transform="translate(810 1284) rotate(-38)">Silk St</text>
          <text transform="translate(968 1350) rotate(-42)">Trinity Wy</text>
          <text class="tight" transform="translate(1480 1349) rotate(-31)">Oldham Rd</text>
          <text transform="translate(1867 1018) rotate(-28)">Oldham Rd</text>
          <text transform="translate(1915 1112) rotate(50)">A6010</text>
          <text class="tight" transform="translate(1928 1272) rotate(-39)">Bradford Rd</text>
          <text class="tight" transform="translate(2178 951) rotate(54)">Ten Acres Ln</text>
          <text class="tight" transform="translate(2283 1046) rotate(-36)">Briscoe Ln</text>
        </g>
        <g class="water">
          <text transform="translate(672 1350) rotate(-79)">River Irwell</text>
          <text><textPath href="#irwell-n">River Irwell</textPath></text>
        </g>
        <g class="area">
          <text x="296" y="1200">PENDLETON</text>
          <text x="1117" y="1165">STRANGEWAYS</text>
          <text x="1540" y="1155">COLLYHURST</text>
          <text x="1714" y="1137">MILES PLATTING</text>
          <text x="1460" y="1377">ANCOATS</text>
          <text x="2428" y="1393">CLAYTON</text>
        </g>
        <g class="district">
          <text x="1161" y="1212">GREEN QUARTER</text>
          <text x="1267" y="1291">NOMA</text>
        </g>
        <text class="town" x="204" y="1313">Salford</text>
        <g id="stations" fill="none" stroke="#e0433f" stroke-width="2">
          <g transform="translate(552 1364)"><rect x="-9" y="-9" width="18" height="18" rx="3" fill="#fff" stroke="none"/><path d="M-9-2H9M-9 3H9M-3-6L3-2-3 3 3 7"/></g>
          <g transform="translate(1220 1296)"><rect x="-9" y="-9" width="18" height="18" rx="3" fill="#fff" stroke="none"/><path d="M-9-2H9M-9 3H9M-3-6L3-2-3 3 3 7"/></g>
        </g>
      </svg>
      <div class="map-ui">
        <div class="map-type">
          <button class="map-on" type="button">Map</button>
          <button type="button">Satellite</button>
        </div>
        <button class="full" type="button" aria-label="Toggle fullscreen view">
          <svg width="32" height="32" viewBox="0 0 32 32"><path d="M2 11V2h9M21 2h9v9M30 21v9h-9M11 30H2v-9" fill="none" stroke="#666" stroke-width="4"/></svg>
        </button>
      </div>
    </section>
  </main>
</div>
</body>
</html>
```
FILE: styles.css
```css
* { box-sizing: border-box; }
body { margin: 0; background: #fff; color: #464e5f; font: 23px/32px Inter, sans-serif; }
button, input { font: inherit; color: inherit; margin: 0; }
a { color: inherit; text-decoration: none; }
.page { display: flex; flex-direction: column; height: 100vh; min-height: 1100px; padding: 0 87px; overflow: hidden; }

.topbar { display: flex; align-items: center; height: 121px; padding: 24px 23px 0 26px; border-bottom: 2px solid #ebedf3; flex: none; }
.logo { display: flex; }
.logo-side { font: 700 12px Inter, sans-serif; fill: #fff; }
.logo-ehs { font: 700 21px Roboto, sans-serif; fill: #474747; }
.logo-soft { font: 700 6px Inter, sans-serif; letter-spacing: 1px; fill: #777; }
.nav { display: flex; align-items: center; margin-left: 40px; font-size: 32px; font-weight: 600; color: #808080; white-space: nowrap; }
.nav a { display: flex; align-items: center; }
.nav-drop { gap: 20px; margin-right: 30px; }
.nav-plain { margin-right: 40px; }
.chev { width: 14px; height: 10px; fill: none; stroke: #808080; stroke-width: 2; }
.chev-white { stroke: #fff; }
.tools { display: flex; align-items: center; margin-left: auto; }
.btn { display: flex; align-items: center; justify-content: center; height: 68px; border: 0; border-radius: 8px; background: #3699ff; color: #fff; font-size: 22px; white-space: nowrap; }
.btn-green { width: 212px; background: #8bc34a; }
.sep { width: 2px; height: 68px; margin: 0 11px; background: #ebedf3; }
.btn-gear { width: 113px; gap: 18px; padding: 0; }
.btn-bell { position: relative; width: 67px; margin: 0 22px 0 12px; padding: 0; }
.dot { position: absolute; top: -5px; right: -7px; width: 17px; height: 17px; border-radius: 50%; background: #f64e60; }
.btn-user { width: 194px; gap: 12px; padding: 0; }

.title { flex: none; margin: 0; height: 105px; padding-top: 34px; border-bottom: 2px solid #ebedf3; font: 400 41px/48px "Liberation Sans", sans-serif; color: #444; -webkit-text-stroke: 1px #444; }

.content { display: flex; flex-direction: column; flex: 1; min-height: 0; padding-top: 23px; gap: 23px; }
.card { flex: none; border: 2px solid #ebedf3; border-radius: 8px; background: #fff; box-shadow: 0 0 40px rgba(60, 60, 70, .08); }
.card-body { padding: 34px 45px 22px; }
.alert { display: flex; align-items: center; gap: 28px; height: 125px; padding: 0 48px; border-radius: 8px; background: #e1f0ff; color: #3699ff; }
.fields { display: grid; grid-template-columns: 523px 523px; column-gap: 22px; padding: 18px 5px 0; }
.field { display: flex; flex-direction: column; }
.field label { height: 40px; padding-top: 5px; line-height: 32px; }
.field input { width: 100%; height: 62px; padding: 0 22px; border: 2px solid #e4e6ef; border-radius: 8px; background: #fff; outline: 0; }
.field-date input { height: 67px; font-size: 22px; }
.checks { display: flex; align-items: center; align-self: end; height: 67px; padding-left: 5px; gap: 11px; white-space: nowrap; }
.check { display: flex; align-items: center; gap: 7px; }
.check input { appearance: none; width: 42px; height: 42px; border-radius: 8px; background: #8bc34a; display: grid; place-items: center; }
.check input::after { content: ""; width: 9px; height: 18px; margin-bottom: 5px; border: solid #fff; border-width: 0 4px 4px 0; transform: rotate(42deg); }
.card-foot { display: flex; align-items: center; height: 85px; padding: 0 22px 0 11px; gap: 12px; border-top: 2px solid #ebedf3; white-space: nowrap; }
.filter { width: 87px; height: 57px; padding: 0; border: 0; border-radius: 8px; background: #3699ff; color: #fff; font-size: 22px; }
.total { width: 305px; padding: 14px 0; border-radius: 8px; background: #e1f0ff; color: #3699ff; text-align: center; }
.keys { display: flex; gap: 17px; margin-left: auto; color: #fff; }
.key { padding: 11px 12px; border-radius: 8px; }
.key-label { background: #f3f6f9; color: #464e5f; }
.key-in { background: #388e3c; }
.key-out { background: #f14255; }
.key-check { background: #0095ff; }
.key-sos { padding: 11px 10px; background: #ffa800; }

.map { position: relative; flex: 1; min-height: 0; border-radius: 8px 8px 0 0; overflow: hidden; background: #f5f3f3; }
.map-art { position: absolute; inset: 0; width: 100%; height: 100%; }
.map-art path { vector-effect: non-scaling-stroke; }
.st, .art, .riv, .gr, .rail, .tie, .hw, .hc { fill: none; stroke-linejoin: round; }
.st { stroke: #cfdbe5; stroke-width: 2; }
.pale { stroke: #ebedee; }
.art { stroke: #d5dee5; }
.riv { stroke: #90daee; stroke-width: 14; }
.gr { stroke: #78caa5; stroke-width: 1; }
.dash { stroke-dasharray: 7 3; }
.rail { stroke: #d2d4d6; stroke-width: 2; }
.tie { stroke: #d2d4d6; stroke-width: 9; stroke-dasharray: 2 25; }
.sand { fill: #f7efdd; }
.hc { stroke: #7392b6; }
.hw { stroke: #8ba4c1; }
.w3 { stroke-width: 3; }
.w4 { stroke-width: 4; }
.w5 { stroke-width: 5; }
.w7 { stroke-width: 7; }
.w8 { stroke-width: 8; }
.w9 { stroke-width: 9; }
.w10 { stroke-width: 10; }
.w12 { stroke-width: 13; }
.w13 { stroke-width: 14; }
.hw.w10 { stroke-width: 7; }
.hw.w12 { stroke-width: 10; }
.hw.w13 { stroke-width: 11; }
.map-art text { font-family: Roboto, sans-serif; stroke: #f8f8f9; stroke-width: 5; stroke-linejoin: round; paint-order: stroke; }
.map-art .logo text { stroke: none; }
.road text { font-size: 21px; fill: #2c3e55; }
.road .tight { font-size: 20px; }
.water text { font-size: 20px; fill: #14809a; stroke: #90daee; stroke-width: 2; }
.area text { font-size: 18px; font-weight: 500; letter-spacing: 2px; fill: #555b62; }
.district text { font-size: 21px; font-weight: 500; letter-spacing: 2px; fill: #2f3237; }
.map-art .town { font-size: 27px; font-weight: 500; fill: #2f3237; }
.map-ui { position: relative; display: flex; justify-content: space-between; padding: 17px 17px 0; }
.map-type { display: flex; border-radius: 4px; background: #fff; box-shadow: 0 2px 6px rgba(0, 0, 0, .25); overflow: hidden; }
.map-type button { height: 70px; padding: 0 29px; border: 0; background: #fff; font: 31px/70px Roboto, sans-serif; color: #565656; }
.map-type .map-on { font-weight: 500; color: #000; border-right: 2px solid #eee; }
.full { display: grid; place-items: center; width: 70px; height: 70px; padding: 0; border: 0; border-radius: 4px; background: #fff; box-shadow: 0 2px 6px rgba(0, 0, 0, .25); }
```
